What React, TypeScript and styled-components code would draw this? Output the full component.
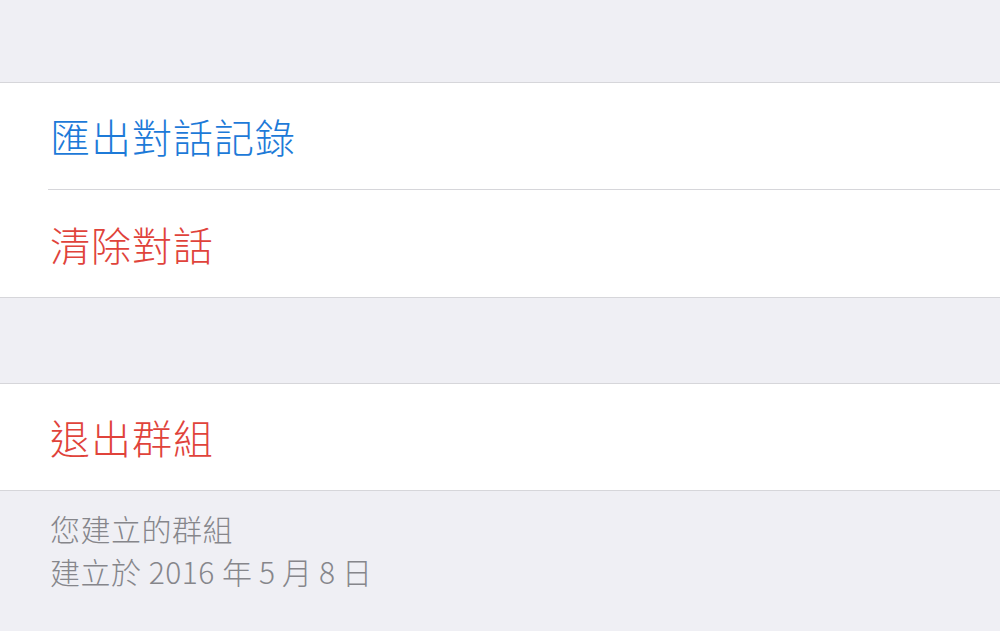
import React from 'react';
import styled, { createGlobalStyle } from 'styled-components';

const GlobalStyle = createGlobalStyle`
    html, body {
        margin: 0;
        padding: 0;
        background: #efeff4;
    }
    body {
        font-family: 'Noto Sans CJK TC', 'Noto Sans', sans-serif;
    }
`;

type Tone = 'blue' | 'red';

const toneColor: Record<Tone, string> = {
    blue: '#1d7ad8',
    red: '#e0433b',
};

const App: React.FC = () => {
    return (
        <Page>
            <GlobalStyle />
            <Group>
                <Row>
                    <RowInner>
                        <Label tone="blue">匯出對話記錄</Label>
                    </RowInner>
                </Row>
                <Row>
                    <RowInner divided>
                        <Label tone="red">清除對話</Label>
                    </RowInner>
                </Row>
            </Group>
            <Spacer />
            <Group>
                <Row>
                    <RowInner>
                        <Label tone="red">退出群組</Label>
                    </RowInner>
                </Row>
            </Group>
            <Footer>
                <FooterLine>您建立的群組</FooterLine>
                <FooterLine>建立於 2016 年{'\u2009'}5{'\u2009'}月{'\u2009'}8{'\u2009'}日</FooterLine>
            </Footer>
        </Page>
    );
};

const Page = styled.div`
    min-height: 631px;
    padding-top: 82px;
    box-sizing: border-box;
    background: #efeff4;
`;

const Group = styled.div`
    background: #ffffff;
    border-top: 1px solid #d6d6da;
    border-bottom: 1px solid #d6d6da;
`;

const Row = styled.div`
    display: flex;
    padding-left: 48px;
`;

const RowInner = styled.div<{ divided?: boolean }>`
    flex: 1;
    display: flex;
    align-items: center;
    height: ${(p) => (p.divided ? '107px' : '106px')};
    padding-left: 2px;
    border-top: ${(p) => (p.divided ? '1px solid #d6d6da' : 'none')};
`;

const Label = styled.span<{ tone: Tone }>`
    font-size: 40px;
    font-weight: 300;
    letter-spacing: 1px;
    line-height: 1;
    color: ${(p) => toneColor[p.tone]};
`;

const Spacer = styled.div`
    height: 85px;
`;

const Footer = styled.div`
    padding: 16px 0 0 50px;
`;

const FooterLine = styled.div`
    font-size: 30px;
    font-weight: 300;
    line-height: 43px;
    color: #86868b;
    letter-spacing: 0.5px;
`;

export default App;
